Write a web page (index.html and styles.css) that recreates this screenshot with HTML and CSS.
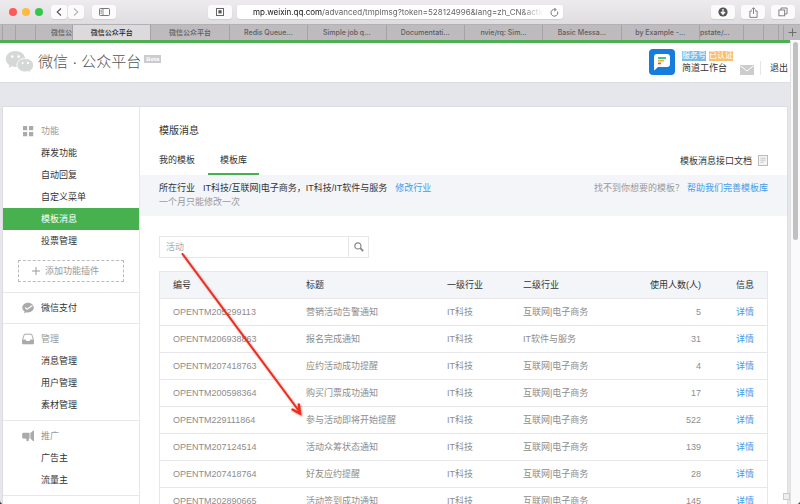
FILE: index.html
```html
<!DOCTYPE html>
<html lang="zh-CN">
<head>
  <meta charset="UTF-8">
  <meta name="viewport" content="width=device-width, initial-scale=1.0">
  <title>微信公众平台</title>
  <link rel="stylesheet" href="styles.css">
</head>
<body>
  <div class="window">
    <div class="toolbar">
      <div class="toolbar-left">
        <div class="lights">
          <span class="light red"></span>
          <span class="light yellow"></span>
          <span class="light green"></span>
        </div>
        <div class="nav-btns">
          <button class="tool-btn narrow" aria-label="后退">
            <svg width="6" height="8" viewBox="0 0 6 8"><path d="M5 0.5L1.2 4L5 7.5" fill="none" stroke="#555" stroke-width="1.1"/></svg>
          </button>
          <button class="tool-btn narrow" aria-label="前进">
            <svg width="6" height="8" viewBox="0 0 6 8"><path d="M1 0.5L4.8 4L1 7.5" fill="none" stroke="#b5b5b5" stroke-width="1.1"/></svg>
          </button>
        </div>
        <button class="tool-btn" aria-label="边栏">
          <svg width="11" height="8" viewBox="0 0 11 8"><rect x="0.5" y="0.5" width="10" height="7" rx="0.8" fill="none" stroke="#777"/><path d="M4 0.5V7.5M1.5 2.2H3M1.5 3.7H3M1.5 5.2H3" fill="none" stroke="#777" stroke-width="0.8"/></svg>
        </button>
      </div>
      <div class="toolbar-center">
        <button class="tool-btn" aria-label="阅读器">
          <svg width="8" height="8" viewBox="0 0 8 8"><rect x="0.5" y="0.5" width="7" height="7" fill="none" stroke="#666"/><rect x="2.4" y="2.2" width="3.2" height="3.2" fill="#555"/></svg>
        </button>
        <div class="address">
          <span class="url"><b>mp.weixin.qq.com</b>/advanced/tmplmsg?token=528124996&amp;lang=zh_CN&amp;action</span>
          <button class="reload" aria-label="重新载入">
            <svg width="9" height="9" viewBox="0 0 9 9"><path d="M7.6 3.6A3.4 3.4 0 1 1 4.9 1.4" fill="none" stroke="#666" stroke-width="0.9"/><path d="M4.2 0L6.4 1.6L4.2 3.1" fill="none" stroke="#666" stroke-width="0.9"/></svg>
          </button>
        </div>
      </div>
      <div class="toolbar-right">
        <button class="tool-btn" aria-label="下载">
          <svg width="10" height="10" viewBox="0 0 10 10"><circle cx="5" cy="5" r="4.6" fill="#555"/><path d="M5 2V6.6M2.9 4.9L5 7.2L7.1 4.9" fill="none" stroke="#fff" stroke-width="1.3"/></svg>
        </button>
        <button class="tool-btn" aria-label="共享">
          <svg width="9" height="11" viewBox="0 0 9 11"><path d="M3 4H0.9V10.4H8.1V4H6M4.5 7V0.9M2.6 2.6L4.5 0.7L6.4 2.6" fill="none" stroke="#777" stroke-width="0.9"/></svg>
        </button>
        <button class="tool-btn" aria-label="所有标签页">
          <svg width="10" height="10" viewBox="0 0 10 10"><rect x="0.9" y="3" width="5.8" height="5.8" fill="none" stroke="#777" stroke-width="0.9"/><path d="M3 3V1H9V6.9H6.7" fill="none" stroke="#777" stroke-width="0.9"/></svg>
        </button>
      </div>
    </div>

    <div class="tabbar">
      <a class="browser-tab w3" href="#"></a>
      <a class="browser-tab w13" href="#"></a>
      <a class="browser-tab w20" href="#"></a>
      <a class="browser-tab w37" href="#">微信公</a>
      <a class="browser-tab active" href="#">微信公众平台</a>
      <a class="browser-tab" href="#">微信公众平台</a>
      <a class="browser-tab" href="#">Redis Queue...</a>
      <a class="browser-tab" href="#">Simple job q...</a>
      <a class="browser-tab" href="#">Documentati...</a>
      <a class="browser-tab" href="#">nvie/rq: Sim...</a>
      <a class="browser-tab" href="#">Basic Messa...</a>
      <a class="browser-tab" href="#">by Example -...</a>
      <a class="browser-tab w44" href="#">pstate/...</a>
      <a class="browser-tab w20" href="#"></a>
      <a class="browser-tab w15" href="#"></a>
      <a class="browser-tab w5" href="#"></a>
      <button class="new-tab" aria-label="新建标签页">
        <svg width="9" height="9" viewBox="0 0 9 9"><path d="M4.5 0.5V8.5M0.5 4.5H8.5" stroke="#666" stroke-width="0.9"/></svg>
      </button>
    </div>

    <div class="viewport">
      <div class="page">
        <header class="header">
          <a class="logo" href="#">
            <svg width="30" height="24" viewBox="0 0 30 24">
              <path d="M10.5 1C5 1 0.8 4.6 0.8 9C0.8 11.6 2.2 13.8 4.4 15.3L3.6 18L6.8 16.3C8 16.7 9.2 16.9 10.5 16.9C16 16.9 20.2 13.4 20.2 9S16 1 10.5 1Z" fill="#d5d8d6"/>
              <circle cx="7.2" cy="6.6" r="1.3" fill="#fff"/><circle cx="13.6" cy="6.6" r="1.3" fill="#fff"/>
              <path d="M20.3 8.3C15.6 8.3 12 11.4 12 15.2S15.6 22 20.3 22C21.4 22 22.4 21.8 23.4 21.5L26.1 23L25.4 20.6C27.3 19.4 28.6 17.4 28.6 15.2C28.6 11.4 25 8.3 20.3 8.3Z" fill="#d5d8d6" stroke="#fff" stroke-width="0.9"/>
              <circle cx="17.6" cy="13.1" r="1.1" fill="#fff"/><circle cx="23" cy="13.1" r="1.1" fill="#fff"/>
            </svg>
            <span class="logo-text">微信 · 公众平台</span>
            <span class="beta">Beta</span>
          </a>
          <div class="account">
            <svg class="avatar" width="26" height="26" viewBox="0 0 26 26">
              <rect width="26" height="26" rx="4" fill="#177ddc"/>
              <path d="M8 5H18Q21 5 21 8V15Q21 18 18 18H9L5.6 21.2Q5 21.4 5 20.6V8Q5 5 8 5Z" fill="#fff"/>
              <path d="M9 9H17" stroke="#1bbf7a" stroke-width="1.7"/><path d="M9 11.7H15" stroke="#f8b62a" stroke-width="1.7"/><path d="M9 14.4H12" stroke="#f0503c" stroke-width="1.7"/>
            </svg>
            <div class="account-info">
              <div class="badges"><span class="badge blue">服务号</span><span class="badge orange">已认证</span></div>
              <a class="account-name" href="#">简道工作台</a>
            </div>
            <a class="mail" href="#" aria-label="通知">
              <svg width="14" height="10" viewBox="0 0 14 10"><rect width="14" height="10" fill="#ccc"/><path d="M0.5 0.8L7 6L13.5 0.8" fill="none" stroke="#fff" stroke-width="1"/></svg>
            </a>
            <a class="logout" href="#">退出</a>
          </div>
        </header>

        <div class="panel">
          <nav class="sidebar">
            <div class="group first">
              <div class="group-title">
                <svg width="12" height="12" viewBox="0 0 12 12"><path d="M1 1H5.2V5.2H1ZM7 1H11.2V5.2H7ZM1 7H5.2V11.2H1ZM7 7H11.2V11.2H7Z" fill="#aaa"/></svg>
                功能
              </div>
              <a class="item" href="#">群发功能</a>
              <a class="item" href="#">自动回复</a>
              <a class="item" href="#">自定义菜单</a>
              <a class="item selected" href="#">模板消息</a>
              <a class="item" href="#">投票管理</a>
              <button class="add-plugin">
                <svg width="8" height="8" viewBox="0 0 8 8"><path d="M4 0V8M0 4H8" stroke="#999" stroke-width="1"/></svg>
                添加功能插件
              </button>
            </div>
            <div class="group">
              <a class="group-title dark" href="#">
                <svg width="12" height="12" viewBox="0 0 12 12"><path d="M6 0.8C2.8 0.8 0.3 3 0.3 5.6C0.3 7.2 1.2 8.6 2.6 9.5L2.2 11.4L4.4 10.2C4.9 10.3 5.5 10.4 6 10.4C9.2 10.4 11.8 8.2 11.8 5.6S9.2 0.8 6 0.8Z" fill="#aaa"/><path d="M3.2 5.4L5 7.3L10.4 3.6" fill="none" stroke="#fff" stroke-width="1.2"/></svg>
                微信支付
              </a>
            </div>
            <div class="group">
              <div class="group-title">
                <svg width="12" height="12" viewBox="0 0 12 12"><path d="M2.4 1.2H9.6L11.4 6.4V10.8H0.6V6.4Z" fill="none" stroke="#aaa" stroke-width="1"/><path d="M0.6 6.4H3.6C3.9 8.6 8.1 8.6 8.4 6.4H11.4V11H0.6Z" fill="#aaa"/></svg>
                管理
              </div>
              <a class="item" href="#">消息管理</a>
              <a class="item" href="#">用户管理</a>
              <a class="item" href="#">素材管理</a>
            </div>
            <div class="group">
              <div class="group-title">
                <svg width="12" height="12" viewBox="0 0 12 12"><path d="M0.2 4Q0.2 2.8 1.4 2.8H7.6V8.6H6.8V10.2Q6.8 11.2 5.6 11.2Q4.4 11.2 4.4 10.2V9L3 8.6H1.4Q0.2 8.6 0.2 7.4ZM8.4 2.9L11 0.8H12V11H11L8.4 8.6Z" fill="#aaa"/></svg>
                推广
              </div>
              <a class="item" href="#">广告主</a>
              <a class="item" href="#">流量主</a>
            </div>
            <div class="group"></div>
          </nav>

          <main class="main">
            <h1 class="title">模版消息</h1>
            <div class="tabs">
              <a class="tab" href="#">我的模板</a>
              <a class="tab current" href="#">模板库</a>
              <a class="doc-link" href="#">
                模板消息接口文档
                <svg width="10" height="11" viewBox="0 0 10 11"><rect x="0.5" y="0.5" width="9" height="10" fill="#f4f4f4" stroke="#bbb"/><path d="M2.4 3.2H7.6M2.4 5.2H7.6M2.4 7.2H5.6" stroke="#bbb" stroke-width="0.8"/></svg>
              </a>
            </div>
            <div class="industry">
              <div>
                <p>所在行业<span class="industry-value">IT科技/互联网|电子商务，IT科技/IT软件与服务</span><a href="#">修改行业</a></p>
                <p class="muted">一个月只能修改一次</p>
              </div>
              <p class="muted help">找不到你想要的模板？<a href="#">帮助我们完善模板库</a></p>
            </div>

            <form class="search">
              <input type="text" value="活动" aria-label="搜索模板">
              <button type="button" aria-label="搜索">
                <svg width="10" height="10" viewBox="0 0 10 10"><circle cx="3.9" cy="3.9" r="3.1" fill="none" stroke="#888" stroke-width="1.2"/><path d="M6.2 6.2L9.2 9" stroke="#888" stroke-width="1.8"/></svg>
              </button>
            </form>

            <table class="templates">
              <thead>
                <tr><th class="col-id">编号</th><th>标题</th><th class="col-first">一级行业</th><th class="col-second">二级行业</th><th class="col-users">使用人数(人)</th><th class="col-info">信息</th></tr>
              </thead>
              <tbody>
                <tr><td>OPENTM205299113</td><td>营销活动告警通知</td><td>IT科技</td><td>互联网|电子商务</td><td class="num">5</td><td class="num"><a href="#">详情</a></td></tr>
                <tr><td>OPENTM206938863</td><td>报名完成通知</td><td>IT科技</td><td>IT软件与服务</td><td class="num">31</td><td class="num"><a href="#">详情</a></td></tr>
                <tr><td>OPENTM207418763</td><td>应约活动成功提醒</td><td>IT科技</td><td>互联网|电子商务</td><td class="num">4</td><td class="num"><a href="#">详情</a></td></tr>
                <tr><td>OPENTM200598364</td><td>购买门票成功通知</td><td>IT科技</td><td>互联网|电子商务</td><td class="num">17</td><td class="num"><a href="#">详情</a></td></tr>
                <tr><td>OPENTM229111864</td><td>参与活动即将开始提醒</td><td>IT科技</td><td>互联网|电子商务</td><td class="num">522</td><td class="num"><a href="#">详情</a></td></tr>
                <tr><td>OPENTM207124514</td><td>活动众筹状态通知</td><td>IT科技</td><td>互联网|电子商务</td><td class="num">139</td><td class="num"><a href="#">详情</a></td></tr>
                <tr><td>OPENTM207418764</td><td>好友应约提醒</td><td>IT科技</td><td>互联网|电子商务</td><td class="num">28</td><td class="num"><a href="#">详情</a></td></tr>
                <tr><td>OPENTM202890665</td><td>活动签到成功通知</td><td>IT科技</td><td>互联网|电子商务</td><td class="num">145</td><td class="num"><a href="#">详情</a></td></tr>
              </tbody>
            </table>
          </main>
        </div>
        <span class="corner-box"></span>
      </div>
      <div class="scrollbar"><div class="thumb"></div></div>
    </div>

    <svg class="arrow" width="126" height="168" viewBox="0 0 126 168">
      <path d="M2.5 2L119 159" fill="none" stroke="#f62a17" stroke-width="2" stroke-linecap="round"/>
      <path d="M112.5 157.5L120 161.5L118.8 152.5" fill="none" stroke="#f62a17" stroke-width="2.4" stroke-linecap="round"/>
    </svg>
  </div>
</body>
</html>
```

FILE: styles.css
```css
* {
  margin: 0;
  padding: 0;
  box-sizing: border-box;
}

html {
  background-color: #444;
}

body {
  font-family: "Liberation Sans", "Noto Sans CJK SC", sans-serif;
  font-size: 9px;
  line-height: 14px;
  color: #333;
}

a {
  color: #459ae9;
  text-decoration: none;
}

button {
  border: none;
  background: none;
  font: inherit;
}

svg {
  display: block;
  flex: none;
}

.window {
  position: relative;
  display: flex;
  flex-direction: column;
  height: 100vh;
  overflow: hidden;
  border-radius: 0 0 4px 4px;
  background-color: #e6e7ec;
}

/* browser toolbar */

.toolbar {
  display: grid;
  grid-template-columns: 208px minmax(0, 1fr) 237px;
  align-items: center;
  flex: none;
  height: 25px;
  border-bottom: 1px solid #b3b1b4;
  background: linear-gradient(#edebee, #dfdde0);
}

.toolbar-left,
.toolbar-center,
.toolbar-right {
  display: flex;
  align-items: center;
}

.toolbar-left {
  gap: 8px;
  padding-left: 9px;
}

.toolbar-center {
  gap: 5px;
}

.toolbar-right {
  justify-content: flex-end;
  gap: 6px;
  padding-right: 5px;
}

.lights {
  display: flex;
  gap: 5px;
}

.light {
  width: 8px;
  height: 8px;
  border-radius: 50%;
}

.red {
  background-color: #fc5b57;
}

.yellow {
  background-color: #fdbc40;
}

.green {
  background-color: #34c84a;
}

.nav-btns {
  display: flex;
  gap: 1px;
}

.tool-btn {
  display: flex;
  align-items: center;
  justify-content: center;
  flex: none;
  width: 24px;
  height: 14px;
  border-radius: 3px;
  background-color: #fbfbfb;
  box-shadow: 0 1px 1px #cfcdd0;
}

.tool-btn.narrow {
  width: 16px;
}

.address {
  display: flex;
  align-items: center;
  flex: 1;
  min-width: 0;
  height: 14px;
  padding: 0 4px 0 16px;
  border-radius: 3px;
  background-color: #fff;
  box-shadow: 0 1px 1px #cfcdd0;
}

.url {
  flex: 1;
  overflow: hidden;
  font-family: Inter, sans-serif;
  font-size: 8px;
  white-space: nowrap;
  color: #666;
  -webkit-mask-image: linear-gradient(to right, #000 92%, transparent);
  mask-image: linear-gradient(to right, #000 92%, transparent);
}

.url b {
  font-weight: 400;
  color: #111;
}

.reload {
  margin-left: 6px;
}

/* browser tabs */

.tabbar {
  display: flex;
  flex: none;
  height: 15px;
  background-color: #bdbbbe;
}

.browser-tab {
  flex: 1;
  overflow: hidden;
  border-right: 1px solid #a5a3a6;
  font-family: Inter, "Noto Sans CJK SC", sans-serif;
  font-size: 7px;
  font-weight: 500;
  line-height: 15px;
  text-align: center;
  white-space: nowrap;
  color: #5e5c60;
}

.browser-tab.active {
  background-color: #dcdadd;
  color: #222;
}

.w3 {
  flex: none;
  width: 3px;
}

.w5 {
  flex: none;
  width: 5px;
}

.w13 {
  flex: none;
  width: 13px;
}

.w15 {
  flex: none;
  width: 15px;
}

.w20 {
  flex: none;
  width: 20px;
}

.w37 {
  flex: none;
  width: 37px;
  padding-left: 15px;
  text-align: left;
}

.w44 {
  flex: none;
  width: 44px;
  text-align: left;
}

.new-tab {
  display: flex;
  align-items: center;
  justify-content: center;
  width: 16px;
}

/* page */

.viewport {
  display: flex;
  flex: 1;
  min-height: 0;
}

.page {
  position: relative;
  flex: 1;
  min-width: 0;
  overflow: hidden;
  border-top: 3px solid #4fb053;
}

.scrollbar {
  width: 10px;
  padding: 2px;
  border-left: 1px solid #e0e0e0;
  background-color: #fafafa;
}

.thumb {
  height: 43%;
  border-radius: 3px;
  background-color: #c1c1c1;
}

.header {
  display: flex;
  justify-content: space-between;
  height: 40px;
  padding: 6px 2px 0 5px;
  border-bottom: 1px solid #dcdde1;
  background-color: #fff;
}

.logo {
  display: flex;
  align-items: flex-start;
  height: 26px;
  gap: 3px;
  color: #555;
}

.logo svg {
  margin-top: 1px;
}

.logo-text {
  font-size: 15px;
  font-weight: 300;
  line-height: 26px;
}

.beta {
  margin-top: 6px;
  padding: 0 2px;
  background-color: #ccc;
  font-size: 6px;
  font-weight: 700;
  line-height: 8px;
  color: #fff;
}

.account {
  display: flex;
  align-items: flex-end;
  height: 26px;
}

.account-info {
  margin: 0 7px;
}

.badges {
  display: flex;
  gap: 3px;
}

.badge {
  font-size: 8px;
  line-height: 10px;
  color: #fff;
}

.badge.blue {
  background-color: #7fbbe6;
}

.badge.orange {
  background-color: #fbc06f;
}

.account-name,
.logout {
  color: #333;
}

.account-name {
  display: block;
}

.mail {
  padding-right: 6px;
}

.logout {
  padding-left: 9px;
  border-left: 1px solid #e6e6e6;
}

.panel {
  display: flex;
  margin: 23px 2px 0;
  border: 1px solid #dcdde1;
  background-color: #fff;
}

/* sidebar */

.sidebar {
  flex: none;
  width: 137px;
  border-right: 1px solid #e7e7eb;
}

.group {
  padding: 4px 0;
  border-top: 1px solid #e7e7eb;
}

.group.first {
  padding: 13px 0 10px;
  border-top: none;
}

.group-title {
  display: flex;
  align-items: center;
  gap: 7px;
  padding-left: 19px;
  line-height: 22px;
  color: #999;
}

.group-title.dark {
  color: #333;
}

.item {
  display: block;
  padding-left: 38px;
  line-height: 22px;
  color: #333;
}

.item.selected {
  background-color: #48b14f;
  color: #fff;
}

.add-plugin {
  display: flex;
  align-items: center;
  gap: 5px;
  width: 106px;
  height: 22px;
  margin: 8px 0 0 15px;
  padding-left: 13px;
  border: 1px dashed #bbb;
  color: #999;
}

/* main */

.main {
  flex: 1;
  min-width: 0;
}

.title {
  padding: 14px 19px 0;
  font-size: 10px;
  font-weight: 400;
  line-height: 20px;
}

.tabs {
  display: flex;
  padding: 5px 19px 0;
}

.tab,
.doc-link {
  height: 29px;
  line-height: 28px;
  color: #333;
}

.tab.current {
  margin-left: 13px;
  padding: 0 12px;
  border-bottom: 2px solid #48b14f;
}

.doc-link {
  display: flex;
  align-items: center;
  gap: 6px;
  margin-left: auto;
}

.industry {
  display: flex;
  justify-content: space-between;
  padding: 6px 19px 7px;
  background-color: #f4f5f9;
}

.industry-value {
  margin: 0 8px;
}

.muted {
  color: #999;
}

.help a {
  margin-left: 3px;
}

.search {
  display: flex;
  width: 210px;
  height: 22px;
  margin: 20px 19px 13px;
  border: 1px solid #e7e7eb;
}

.search input {
  flex: 1;
  min-width: 0;
  padding: 0 6px;
  border: none;
  outline: none;
  font: inherit;
  color: #aaa;
}

.search button {
  display: flex;
  align-items: center;
  justify-content: center;
  width: 20px;
  border-left: 1px solid #e7e7eb;
}

.templates {
  width: calc(100% - 38px);
  margin: 0 19px;
  table-layout: fixed;
  border: 1px solid #e7e7eb;
  border-spacing: 0;
}

.templates th,
.templates td {
  height: 27px;
  padding: 0 13px;
  border-bottom: 1px solid #e7e7eb;
  text-align: left;
  white-space: nowrap;
}

.templates th {
  background-color: #f4f5f9;
  font-weight: 400;
}

.templates td {
  color: #8d8d8d;
}

.templates .num,
.templates .col-users,
.templates .col-info {
  text-align: right;
}

.col-id {
  width: 133px;
}

.col-first {
  width: 76px;
}

.col-second {
  width: 109px;
}

.col-users {
  width: 95px;
}

.col-info {
  width: 53px;
}

/* overlays */

.corner-box {
  position: absolute;
  right: 0;
  bottom: 4px;
  width: 7px;
  height: 7px;
  border: 1px solid #ccc;
  background-color: #eee;
}

.arrow {
  position: absolute;
  left: 180px;
  top: 252px;
  filter: drop-shadow(1px 1px 1px rgba(0, 0, 0, 0.4));
}
```
